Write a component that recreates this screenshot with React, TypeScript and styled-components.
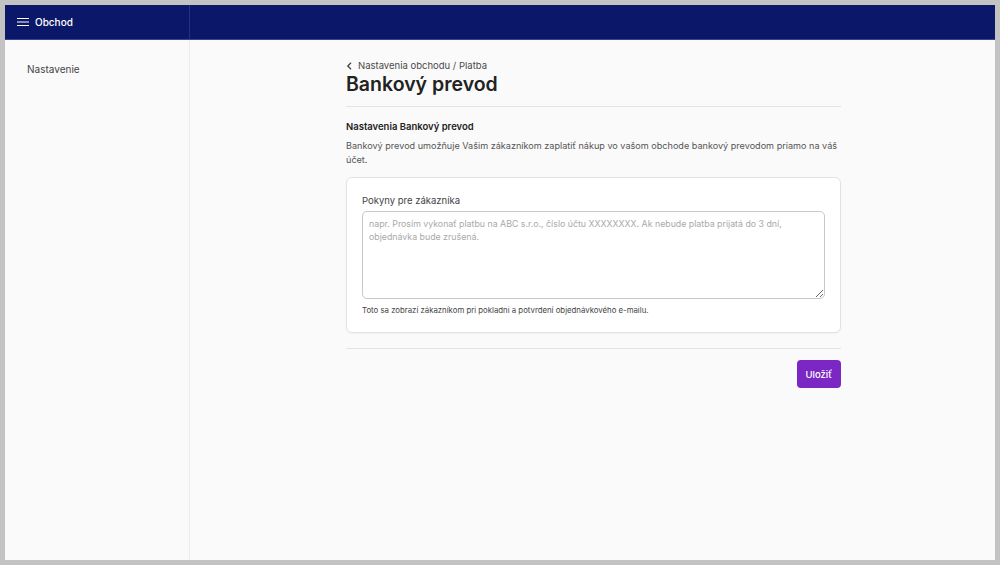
import React from 'react'
import styled, { createGlobalStyle } from 'styled-components'

const GlobalStyle = createGlobalStyle`
  html, body {
    margin: 0;
    padding: 0;
    height: 100%;
  }
  body {
    background: #c3c3c3;
    font-family: 'Inter', 'Noto Sans', sans-serif;
    color: #2b2b2b;
  }
  #root {
    height: 100%;
  }
`

const Frame = styled.div`
  box-sizing: border-box;
  height: 565px;
  padding: 5px;
`

const Window = styled.div`
  height: 100%;
  display: flex;
  flex-direction: column;
  background: #fafafa;
`

const TopBar = styled.header`
  height: 34px;
  display: flex;
  background: #0b1768;
  border-bottom: 1px solid #3a4490;
`

const TopBarLeft = styled.div`
  width: 185px;
  display: flex;
  align-items: center;
  gap: 6px;
  padding-left: 12px;
  box-sizing: border-box;
  border-right: 1px solid #27317d;
  color: #fff;
  font-size: 10px;
  font-weight: 500;
`

const Body = styled.div`
  flex: 1;
  display: flex;
  min-height: 0;
`

const Sidebar = styled.aside`
  width: 185px;
  box-sizing: border-box;
  border-right: 1px solid #ececec;
  padding: 23px 0 0 22px;
  font-size: 10px;
  color: #444;
`

const Main = styled.main`
  flex: 1;
  display: flex;
  justify-content: center;
  padding-left: 2px;
`

const Column = styled.div`
  width: 495px;
  padding-top: 20px;
`

const Breadcrumb = styled.div`
  display: flex;
  align-items: center;
  gap: 5px;
  font-size: 9.5px;
  color: #4a4a4a;
`

const Title = styled.h1`
  margin: 1px 0 0;
  font-size: 19.5px;
  font-weight: 600;
  color: #222;
`

const Divider = styled.hr<{ $top: number; $bottom: number }>`
  border: 0;
  border-top: 1px solid #e3e3e3;
  margin: ${({ $top, $bottom }) => `${$top}px 0 ${$bottom}px`};
`

const SectionTitle = styled.h2`
  margin: 0;
  font-size: 9.5px;
  font-weight: 600;
  color: #222;
`

const Description = styled.p`
  margin: 7px 0 0;
  font-size: 9.1px;
  line-height: 14px;
  color: #555;
`

const Card = styled.div`
  margin-top: 10px;
  background: #fff;
  border: 1px solid #e2e2e2;
  border-radius: 6px;
  box-shadow: 0 1px 2px rgba(0, 0, 0, 0.04);
  padding: 17px 15px 17px;
`

const Label = styled.label`
  display: block;
  font-size: 9.5px;
  color: #444;
  margin-bottom: 5px;
`

const TextArea = styled.textarea`
  display: block;
  box-sizing: border-box;
  width: 100%;
  height: 88px;
  border: 1px solid #c8c8c8;
  border-radius: 5px;
  padding: 5px 6px;
  font-family: 'Inter', 'Noto Sans', sans-serif;
  font-size: 8.8px;
  line-height: 13px;
  color: #333;
  background: #fff;

  &::placeholder {
    color: #a9a9a9;
  }
`

const Hint = styled.div`
  margin-top: 6px;
  font-size: 7.8px;
  color: #444;
`

const Actions = styled.div`
  display: flex;
  justify-content: flex-end;
`

const SaveButton = styled.button`
  height: 28px;
  padding: 0 9px;
  border: 0;
  border-radius: 4px;
  background: #7b27c4;
  color: #fff;
  font-family: 'Inter', 'Noto Sans', sans-serif;
  font-size: 9.5px;
  font-weight: 500;
`

const App: React.FC = () => {
  return (
    <>
      <GlobalStyle />
      <Frame>
        <Window>
          <TopBar>
            <TopBarLeft>
              <svg width="12" height="10" viewBox="0 0 12 10" fill="none" stroke="#fff" strokeWidth="1.2">
                <path d="M0 1.5h12M0 5h12M0 8.5h12" />
              </svg>
              Obchod
            </TopBarLeft>
          </TopBar>
          <Body>
            <Sidebar>Nastavenie</Sidebar>
            <Main>
              <Column>
                <Breadcrumb>
                  <svg width="7" height="8" viewBox="0 0 7 8" fill="none" stroke="#444" strokeWidth="1.3">
                    <path d="M5 0.8L1.8 4L5 7.2" />
                  </svg>
                  Nastavenia obchodu / Platba
                </Breadcrumb>
                <Title>Bankový prevod</Title>
                <Divider $top={10} $bottom={14} />
                <SectionTitle>Nastavenia Bankový prevod</SectionTitle>
                <Description>
                  Bankový prevod umožňuje Vašim zákazníkom zaplatiť nákup vo vašom obchode bankový prevodom priamo na váš
                  účet.
                </Description>
                <Card>
                  <Label htmlFor="instructions">Pokyny pre zákazníka</Label>
                  <TextArea
                    id="instructions"
                    placeholder="napr. Prosím vykonať platbu na ABC s.r.o., číslo účtu XXXXXXXX. Ak nebude platba prijatá do 3 dní, objednávka bude zrušená."
                  />
                  <Hint>Toto sa zobrazí zákazníkom pri pokladni a potvrdení objednávkového e-mailu.</Hint>
                </Card>
                <Divider $top={15} $bottom={11} />
                <Actions>
                  <SaveButton>Uložiť</SaveButton>
                </Actions>
              </Column>
            </Main>
          </Body>
        </Window>
      </Frame>
    </>
  )
}

export default App
